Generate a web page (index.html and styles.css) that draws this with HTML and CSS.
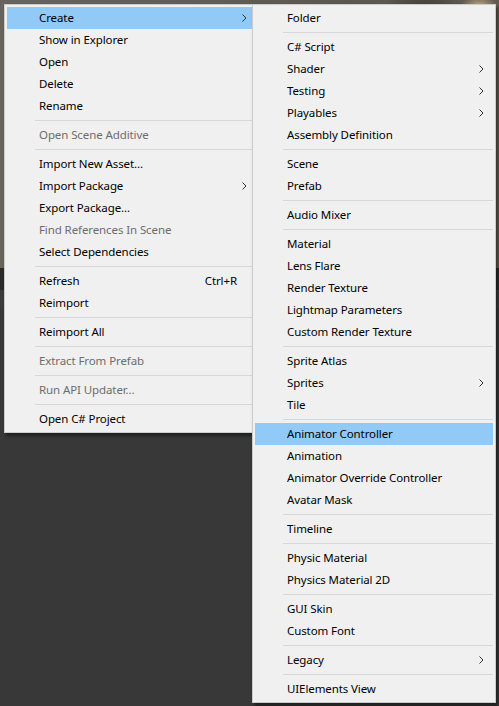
FILE: index.html
```html
<!DOCTYPE html>
<html>
<head>
<meta charset="utf-8">
<link rel="stylesheet" href="styles.css">
</head>
<body>
<div class="backdrop">
  <div class="scene"></div>
  <div class="toolbar"></div>
  <div class="toolbar2"></div>
  <div class="panel"></div>
</div>

<div class="menu menu-main">
  <div class="item active"><span class="label">Create</span><svg class="arrow" width="5" height="8" viewBox="0 0 5 8"><polyline points="0.5,0.5 4,4 0.5,7.5" fill="none" stroke="#333" stroke-width="1"/></svg></div>
  <div class="item"><span class="label">Show in Explorer</span></div>
  <div class="item"><span class="label">Open</span></div>
  <div class="item"><span class="label">Delete</span></div>
  <div class="item"><span class="label">Rename</span></div>
  <div class="sep"></div>
  <div class="item disabled"><span class="label">Open Scene Additive</span></div>
  <div class="sep"></div>
  <div class="item"><span class="label">Import New Asset...</span></div>
  <div class="item"><span class="label">Import Package</span><svg class="arrow" width="5" height="8" viewBox="0 0 5 8"><polyline points="0.5,0.5 4,4 0.5,7.5" fill="none" stroke="#333" stroke-width="1"/></svg></div>
  <div class="item"><span class="label">Export Package...</span></div>
  <div class="item disabled"><span class="label">Find References In Scene</span></div>
  <div class="item"><span class="label">Select Dependencies</span></div>
  <div class="sep"></div>
  <div class="item"><span class="label">Refresh</span><span class="shortcut">Ctrl+R</span></div>
  <div class="item"><span class="label">Reimport</span></div>
  <div class="sep"></div>
  <div class="item"><span class="label">Reimport All</span></div>
  <div class="sep"></div>
  <div class="item disabled"><span class="label">Extract From Prefab</span></div>
  <div class="sep"></div>
  <div class="item disabled"><span class="label">Run API Updater...</span></div>
  <div class="sep"></div>
  <div class="item"><span class="label">Open C# Project</span></div>
</div>

<div class="menu menu-sub">
  <div class="item"><span class="label">Folder</span></div>
  <div class="sep"></div>
  <div class="item"><span class="label">C# Script</span></div>
  <div class="item"><span class="label">Shader</span><svg class="arrow" width="5" height="8" viewBox="0 0 5 8"><polyline points="0.5,0.5 4,4 0.5,7.5" fill="none" stroke="#333" stroke-width="1"/></svg></div>
  <div class="item"><span class="label">Testing</span><svg class="arrow" width="5" height="8" viewBox="0 0 5 8"><polyline points="0.5,0.5 4,4 0.5,7.5" fill="none" stroke="#333" stroke-width="1"/></svg></div>
  <div class="item"><span class="label">Playables</span><svg class="arrow" width="5" height="8" viewBox="0 0 5 8"><polyline points="0.5,0.5 4,4 0.5,7.5" fill="none" stroke="#333" stroke-width="1"/></svg></div>
  <div class="item"><span class="label">Assembly Definition</span></div>
  <div class="sep"></div>
  <div class="item"><span class="label">Scene</span></div>
  <div class="item"><span class="label">Prefab</span></div>
  <div class="sep"></div>
  <div class="item"><span class="label">Audio Mixer</span></div>
  <div class="sep"></div>
  <div class="item"><span class="label">Material</span></div>
  <div class="item"><span class="label">Lens Flare</span></div>
  <div class="item"><span class="label">Render Texture</span></div>
  <div class="item"><span class="label">Lightmap Parameters</span></div>
  <div class="item"><span class="label">Custom Render Texture</span></div>
  <div class="sep"></div>
  <div class="item"><span class="label">Sprite Atlas</span></div>
  <div class="item"><span class="label">Sprites</span><svg class="arrow" width="5" height="8" viewBox="0 0 5 8"><polyline points="0.5,0.5 4,4 0.5,7.5" fill="none" stroke="#333" stroke-width="1"/></svg></div>
  <div class="item"><span class="label">Tile</span></div>
  <div class="sep"></div>
  <div class="item active"><span class="label">Animator Controller</span></div>
  <div class="item"><span class="label">Animation</span></div>
  <div class="item"><span class="label">Animator Override Controller</span></div>
  <div class="item"><span class="label">Avatar Mask</span></div>
  <div class="sep"></div>
  <div class="item"><span class="label">Timeline</span></div>
  <div class="sep"></div>
  <div class="item"><span class="label">Physic Material</span></div>
  <div class="item"><span class="label">Physics Material 2D</span></div>
  <div class="sep"></div>
  <div class="item"><span class="label">GUI Skin</span></div>
  <div class="item"><span class="label">Custom Font</span></div>
  <div class="sep"></div>
  <div class="item"><span class="label">Legacy</span><svg class="arrow" width="5" height="8" viewBox="0 0 5 8"><polyline points="0.5,0.5 4,4 0.5,7.5" fill="none" stroke="#333" stroke-width="1"/></svg></div>
  <div class="sep"></div>
  <div class="item"><span class="label">UIElements View</span></div>
</div>
</body>
</html>
```
FILE: styles.css
```css
html, body {
  margin: 0;
  padding: 0;
  width: 499px;
  height: 706px;
  overflow: hidden;
  background: #383838;
  font-family: "Noto Sans", "Liberation Sans", sans-serif;
  font-size: 11.5px;
  letter-spacing: -0.1px;
  color: #000;
}

.backdrop {
  display: flex;
  flex-direction: column;
  height: 706px;
}

.scene {
  height: 268px;
  background:
    radial-gradient(ellipse at 96% 2%, #b9a47e 0, rgba(185,164,126,0) 18px),
    radial-gradient(ellipse at 85% 4%, #3d3a33 0, rgba(61,58,51,0) 40px),
    linear-gradient(90deg, #6a635b 0%, #625c55 40%, #5c564e 70%, #625b4f 100%);
}

.toolbar {
  height: 22px;
  background: #2a2a2a;
}

.toolbar2 {
  height: 18px;
  background: #3b3b3b;
}

.panel {
  flex: 1;
  background: #383838;
}

.menu {
  position: absolute;
  top: 4px;
  background: #f0f0f0;
  border: 1px solid #cccccc;
  padding: 2px;
  display: flex;
  flex-direction: column;
  box-shadow: 2px 3px 3px rgba(0, 0, 0, 0.45);
}

.menu-main {
  left: 4px;
  width: 249px;
  z-index: 1;
}

.menu-sub {
  left: 252px;
  width: 238px;
  z-index: 2;
}

.item {
  height: 22px;
  display: flex;
  align-items: center;
  padding-left: 32px;
  box-sizing: border-box;
  white-space: nowrap;
}

.item .label {
  line-height: 16px;
  margin-top: -1px;
}

.item.active {
  background: #91c9f7;
}

.item.disabled {
  color: #6d6d6d;
}

.arrow {
  margin-left: auto;
  margin-right: 9px;
  margin-top: -1px;
}

.shortcut {
  margin-left: auto;
  margin-right: 19px;
  line-height: 16px;
  margin-top: -1px;
}

.sep {
  height: 7px;
  display: flex;
  align-items: center;
  padding-left: 28px;
}

.sep::after {
  content: "";
  flex: 1;
  height: 1px;
  background: #d7d7d7;
}
```
